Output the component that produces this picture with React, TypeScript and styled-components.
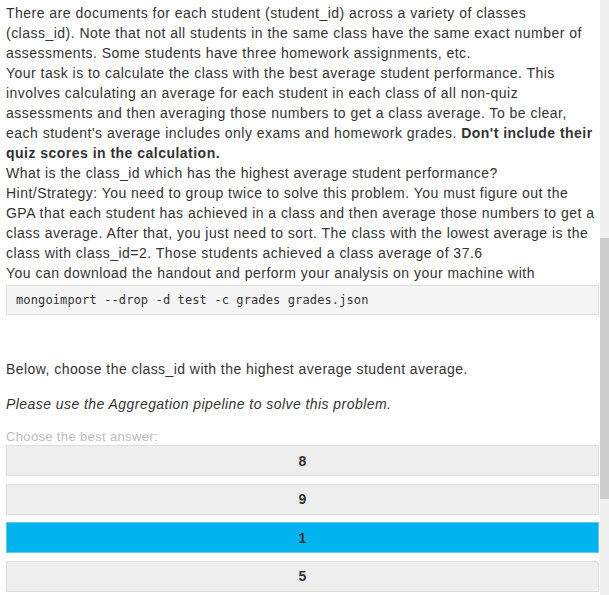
import React from "react";
import styled, { createGlobalStyle } from "styled-components";

const Global = createGlobalStyle`
  html, body { margin: 0; padding: 0; background: #fff; }
  body { font-family: "Liberation Sans", Arial, sans-serif; color: #333; }
`;

const Page = styled.div`
  display: flex;
  width: 609px;
  height: 595px;
  overflow: hidden;
`;

const Content = styled.div`
  flex: 1;
  padding: 3px 1px 0 6px;
  display: flex;
  flex-direction: column;
`;

const Prose = styled.div`
  font-size: 14px;
  line-height: 20px;
  white-space: nowrap;
  letter-spacing: 0.48px;
`;

const Line = styled.div``;

const Code = styled.pre`
  margin: 2px 0 0 0;
  height: 30px;
  box-sizing: border-box;
  border: 1px solid #ddd;
  background: #f5f5f5;
  padding: 0 0 0 9px;
  font-family: "DejaVu Sans Mono", "Liberation Mono", monospace;
  font-size: 12px;
  letter-spacing: 0.12px;
  line-height: 28px;
  color: #333;
`;

const Para = styled.p<{ $top: number; $italic?: boolean }>`
  margin: ${(p) => p.$top}px 0 0 0;
  font-size: 14px;
  line-height: 20px;
  letter-spacing: 0.44px;
  font-style: ${(p) => (p.$italic ? "italic" : "normal")};
`;

const Prompt = styled.div`
  margin-top: 15px;
  font-size: 13px;
  line-height: 16px;
  color: #bbb;
  letter-spacing: 0.35px;
`;

const Answers = styled.div`
  display: flex;
  flex-direction: column;
  gap: 7.5px;
`;

const Answer = styled.div<{ $selected?: boolean }>`
  height: 31px;
  box-sizing: border-box;
  border: 1px solid ${(p) => (p.$selected ? "#5ccaf2" : "#ddd")};
  background: ${(p) => (p.$selected ? "#00b2ee" : "#eee")};
  display: flex;
  align-items: center;
  justify-content: center;
  font-size: 14px;
  font-weight: bold;
  color: #333;
`;

const Scrollbar = styled.div`
  width: 9px;
  background: #f0f0f0;
  display: flex;
  flex-direction: column;
`;

const Thumb = styled.div`
  margin-top: 238px;
  height: 261px;
  background: #cdcdcd;
`;

const lines: React.ReactNode[] = [
  "There are documents for each student (student_id) across a variety of classes",
  "(class_id). Note that not all students in the same class have the same exact number of",
  "assessments. Some students have three homework assignments, etc.",
  "Your task is to calculate the class with the best average student performance. This",
  "involves calculating an average for each student in each class of all non-quiz",
  "assessments and then averaging those numbers to get a class average. To be clear,",
  <>
    each student's average includes only exams and homework grades. <b>Don't include their</b>
  </>,
  <b>quiz scores in the calculation.</b>,
  "What is the class_id which has the highest average student performance?",
  "Hint/Strategy: You need to group twice to solve this problem. You must figure out the",
  "GPA that each student has achieved in a class and then average those numbers to get a",
  "class average. After that, you just need to sort. The class with the lowest average is the",
  "class with class_id=2. Those students achieved a class average of 37.6",
  "You can download the handout and perform your analysis on your machine with",
];

const answers = [
  { label: "8" },
  { label: "9" },
  { label: "1", selected: true },
  { label: "5" },
];

export default function App() {
  return (
    <>
      <Global />
      <Page>
        <Content>
          <Prose>
            {lines.map((l, i) => (
              <Line key={i}>{l}</Line>
            ))}
          </Prose>
          <Code>mongoimport --drop -d test -c grades grades.json</Code>
          <Para $top={44}>Below, choose the class_id with the highest average student average.</Para>
          <Para $top={15} $italic>
            Please use the Aggregation pipeline to solve this problem.
          </Para>
          <Prompt>Choose the best answer:</Prompt>
          <Answers>
            {answers.map((a) => (
              <Answer key={a.label} $selected={a.selected}>
                {a.label}
              </Answer>
            ))}
          </Answers>
        </Content>
        <Scrollbar>
          <Thumb />
        </Scrollbar>
      </Page>
    </>
  );
}
